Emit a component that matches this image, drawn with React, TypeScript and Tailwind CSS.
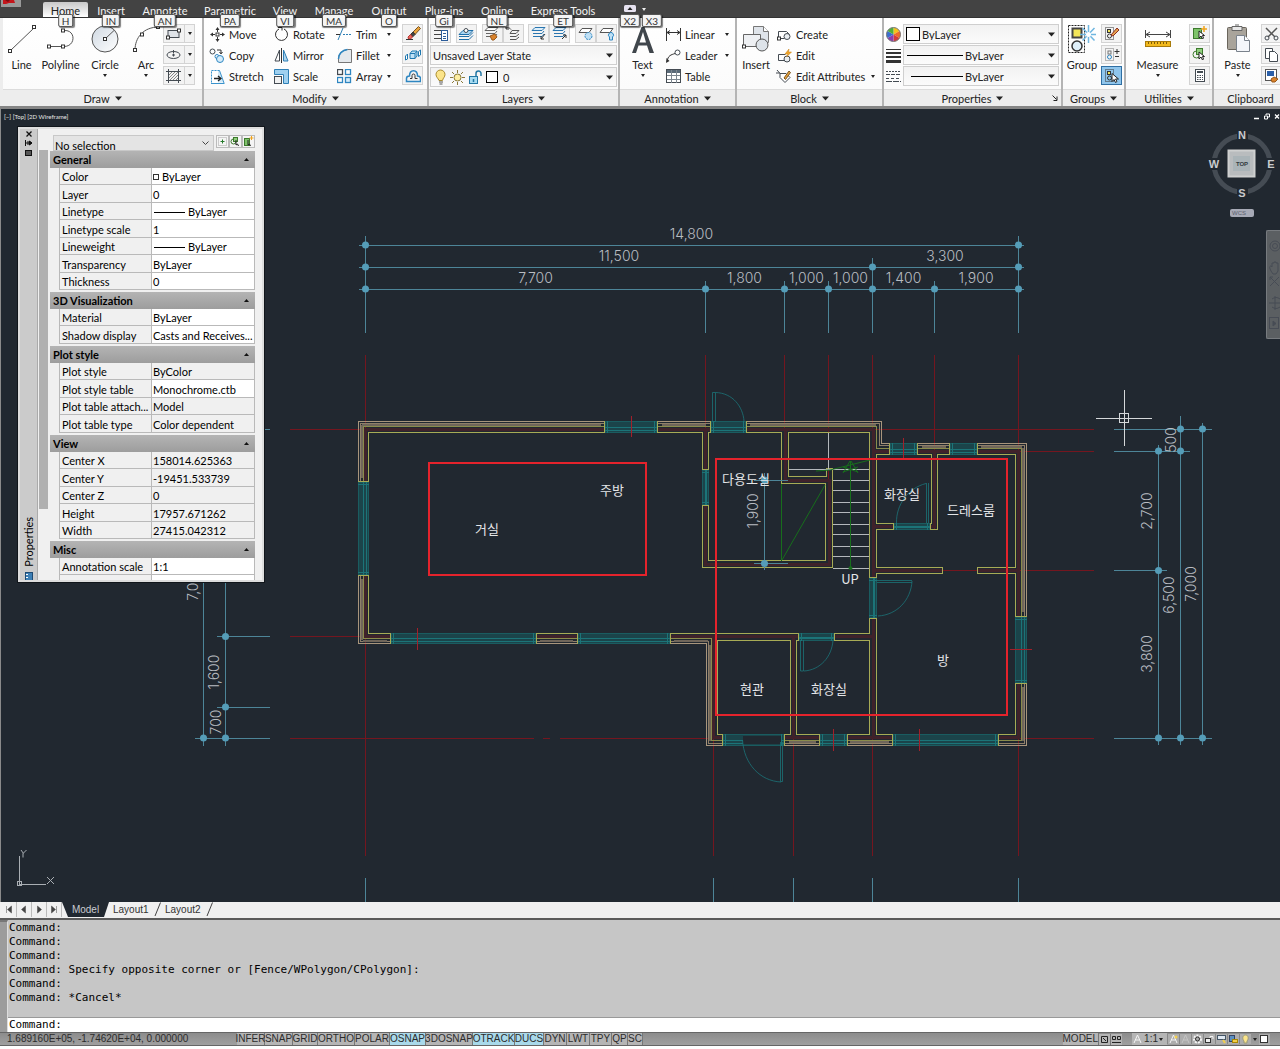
import React from "react";

type Kids = { children?: React.ReactNode };

/* ---------- shared pieces ---------- */

function Svg({ w = 16, h = 16, children }: Kids & { w?: number; h?: number }) {
  return (
    <svg width={w} height={h} viewBox={`0 0 ${w} ${h}`} fill="none" stroke="#444b52" strokeWidth="1" aria-hidden="true" className="block shrink-0">
      {children}
    </svg>
  );
}

function Caret({ big = false }: { big?: boolean }) {
  return big ? (
    <svg width="7" height="5" viewBox="0 0 7 5" aria-hidden="true" className="block shrink-0">
      <path d="M0 0.5h7L3.5 4.5z" fill="#222" />
    </svg>
  ) : (
    <svg width="4" height="3" viewBox="0 0 4 3" aria-hidden="true" className="block shrink-0">
      <path d="M0 0h4L2 3z" fill="#222" />
    </svg>
  );
}

function KeyTip({ children }: Kids) {
  return (
    <span className="absolute top-[14px] left-1/2 z-20 flex h-[13px] min-w-[15px] -translate-x-1/2 items-center justify-center rounded-[2px] border border-[#555] bg-[#f4f4f4] px-[3px] text-[10px] leading-none text-[#333] shadow-[1px_1px_1px_rgba(0,0,0,0.5)]">
      {children}
    </span>
  );
}

function Panel({ title, width, children, caret = true, launcher = false }: Kids & { title: string; width: string; caret?: boolean; launcher?: boolean }) {
  return (
    <section className={`flex shrink-0 grow flex-col border-r-2 border-[#b4b4b4] ${width}`}>
      <div className="flex h-[71px] items-start bg-gradient-to-b from-white to-[#fbfbfb] pt-[6px]">{children}</div>
      <button className="relative flex h-[17px] w-full items-center justify-center gap-[5px] border-t border-[#dcdcdc] bg-[#ededed] leading-none">
        <span>{title}</span>
        {caret && <Caret big />}
        {launcher && (
          <span className="absolute right-[3px] top-[5px]">
            <Svg w={6} h={6}>
              <path d="M0.5 0.5l4 4M5 1.5v4H1.5" stroke="#222" />
            </Svg>
          </span>
        )}
      </button>
    </section>
  );
}

function Big({ icon, label, width, arrow = false }: { icon: React.ReactNode; label: string; width: string; arrow?: boolean }) {
  return (
    <button className={`flex shrink-0 flex-col items-center ${width}`}>
      <span className="flex h-[34px] items-start justify-center">{icon}</span>
      <span className="leading-[14px]">{label}</span>
      {arrow && (
        <span className="mt-[2px]">
          <Caret />
        </span>
      )}
    </button>
  );
}

function Row({ icon, label, arrow = false }: { icon: React.ReactNode; label: string; arrow?: boolean }) {
  return (
    <button className="flex h-[21px] w-full items-center gap-1 whitespace-nowrap text-left leading-none">
      <span className="flex w-4 justify-center">{icon}</span>
      <span>{label}</span>
      {arrow && (
        <span className="ml-auto">
          <Caret />
        </span>
      )}
    </button>
  );
}

function Tile({ label, children, active = false, split = false }: Kids & { label: string; active?: boolean; split?: boolean }) {
  const tone = active ? "border-[#2f6fa3] bg-[#8fc5ec]" : "border-[#d3d3d3] bg-[#f3f3f3]";
  return (
    <button aria-label={label} className={`flex h-[19px] items-center justify-center border ${tone} ${split ? "w-[32px]" : "w-[21px]"}`}>
      {children}
      {split && (
        <span className="ml-[3px] flex h-full items-center border-l border-[#d3d3d3] pl-[3px]">
          <Caret />
        </span>
      )}
    </button>
  );
}

function Combo({ label, value, lead, pad }: { label: string; value: string; lead?: React.ReactNode; pad: string }) {
  return (
    <div className="relative h-[20px] min-w-0 flex-1 border border-[#cfcfcf] bg-gradient-to-b from-[#f2f2f2] to-[#fbfbfb]">
      {lead && <span className="pointer-events-none absolute inset-y-0 left-0 flex items-center">{lead}</span>}
      <select aria-label={label} className={`h-full w-full appearance-none bg-transparent leading-none outline-none ${pad}`}>
        <option>{value}</option>
      </select>
      <span className="pointer-events-none absolute right-[3px] top-[7px]">
        <Caret big />
      </span>
    </div>
  );
}

/* ---------- icons ---------- */

const node = (x: number, y: number) => <rect key={`${x}-${y}`} x={x - 1.5} y={y - 1.5} width="3" height="3" fill="#fff" stroke="#333" />;

const LineIcon = (
  <Svg w={28} h={30}>
    <path d="M3 26L26 4" stroke="#555" />
    {node(2, 27)}
    {node(26, 3)}
  </Svg>
);
const PolylineIcon = (
  <Svg w={30} h={30}>
    <path d="M3 22.5h15c12 0 12-17 0-16" stroke="#555" />
    {node(3, 22.5)}
    {node(17, 22.5)}
    {node(17, 6.5)}
  </Svg>
);
const CircleIcon = (
  <Svg w={28} h={30}>
    <defs>
      <linearGradient id="disc" x1="0" y1="0" x2="1" y2="1">
        <stop offset="0" stopColor="#cfd8e2" />
        <stop offset="1" stopColor="#fff" />
      </linearGradient>
    </defs>
    <circle cx="14" cy="15" r="13" fill="url(#disc)" stroke="#555" />
    <path d="M14 15l9-8.5" stroke="#555" />
    {node(14, 15)}
  </Svg>
);
const ArcIcon = (
  <Svg w={30} h={30}>
    <path d="M4 26C4 14 12 3 28 3" stroke="#555" />
    {node(4, 26)}
    {node(11, 10.5)}
    {node(27, 3)}
  </Svg>
);
const RectIcon = (
  <Svg w={15} h={12}>
    <rect x="2" y="2.5" width="11" height="7" fill="#dfe3e8" />
    {node(2, 9.5)}
    {node(13, 2.5)}
  </Svg>
);
const EllipseIcon = (
  <Svg w={15} h={12}>
    <ellipse cx="7.5" cy="6" rx="6.5" ry="3.5" />
    <path d="M6 6h3M7.5 4.5v3M7.5 1v3" />
  </Svg>
);
const HatchIcon = (
  <Svg w={15} h={14}>
    <path d="M2.5 0v14M12.5 0v14M0 2.5h15M0 11.500h15" />
    <path d="M3 6l3-3M3 9l6-6M4 11l8-8M7 11l5-5M10 11l2-2" stroke="#888" />
  </Svg>
);
const MoveIcon = (
  <Svg w={15} h={15}>
    <path d="M7.500 1v4M7.500 10v4M1 7.500h4M10 7.500h4" stroke="#333" />
    <path d="M7.500 0L5.500 3h4zM7.500 15l-2-3h4zM0 7.500l3-2v4zM15 7.500l-3-2v4z" fill="#333" stroke="none" />
    {node(7.5, 7.5)}
  </Svg>
);
const CopyIcon = (
  <Svg w={16} h={15}>
    <circle cx="3.500" cy="3.500" r="2.500" />
    <circle cx="8" cy="8.500" r="2" stroke="#2e86c1" />
    <circle cx="11" cy="11" r="3.500" fill="#d6ecfa" stroke="#2e86c1" />
    <path d="M8 2h4v3M10.500 4l1.500 2 1.500-2" stroke="#333" />
  </Svg>
);
const StretchIcon = (
  <Svg w={15} h={15}>
    <path d="M1.500 1.500h8l4 12h-12z" fill="#d3e9f7" stroke="none" />
    <path d="M2 2h6v12H2z" fill="#fff" stroke="none" />
    <path d="M1.500 13.500v-12h8" stroke="#3a93cc" strokeDasharray="2 1" />
    <path d="M1 14.500h13.500M9.500 1.500l4.500 12.500" stroke="#3a93cc" />
    <path d="M4 9.500h6M8 7l3 2.500L8 12" stroke="#222" strokeWidth="1.300" />
  </Svg>
);
const RotateIcon = (
  <Svg w={15} h={15}>
    <path d="M10 2A6 6 0 1 1 5 2" stroke="#333" />
    <path d="M4 0.500h4v3" stroke="#333" />
  </Svg>
);
const MirrorIcon = (
  <Svg w={15} h={15}>
    <path d="M5.500 2v11H1z" fill="#fff" />
    <path d="M9.500 2v11H14z" fill="#a9d3ee" stroke="#2e7fb5" />
    <path d="M7.500 0v15" stroke="#333" />
  </Svg>
);
const ScaleIcon = (
  <Svg w={15} h={15}>
    <path d="M0.500 0.500h14v14h-5v-9h-9z" fill="#9fd0ef" stroke="#2e7fb5" />
    <rect x="0.500" y="7.500" width="7" height="7" fill="#f1f1f1" />
  </Svg>
);
const TrimIcon = (
  <Svg w={16} h={13}>
    <path d="M2 12L7 0" stroke="#2e7fb5" />
    <path d="M0 6.500h4" stroke="#333" />
    <path d="M7 6.500h9" stroke="#2e7fb5" strokeDasharray="2 1" />
  </Svg>
);
const FilletIcon = (
  <Svg w={15} h={15}>
    <path d="M1.500 14.500v-4a10 9 0 0 1 9-9h4v13z" fill="#e4e8ec" stroke="#777" />
    <path d="M1.500 11a10 9 0 0 1 9-9.500" stroke="#2e86c1" strokeWidth="1.500" />
  </Svg>
);
const ArrayIcon = (
  <Svg w={15} h={15}>
    <rect x="0.500" y="0.500" width="5" height="5" strokeWidth="1.300" />
    <rect x="8.500" y="0.500" width="5" height="5" stroke="#2e86c1" strokeWidth="1.300" />
    <rect x="0.500" y="8.500" width="5" height="5" stroke="#2e86c1" strokeWidth="1.300" />
    <rect x="8.500" y="8.500" width="5" height="5" stroke="#2e86c1" fill="#d6ecfa" strokeWidth="1.300" />
  </Svg>
);
const EraseIcon = (
  <Svg w={16} h={15}>
    <path d="M8 6l5.500-5.500 2 2L10 8.500z" fill="#e8a33d" stroke="#7a5522" />
    <path d="M5.500 8.500L8 6l2 2.500-2.500 2.500z" fill="#444" stroke="#333" />
    <path d="M3 11l2.500-2.500 2 2.500-2 2H3.500z" fill="#e86b5b" stroke="#b33" />
    <path d="M1 13.500h7" stroke="#333" />
  </Svg>
);
const ExplodeIcon = (
  <Svg w={16} h={14}>
    <path d="M5 5.500L7 3h5v5l-2 2.500H5zM5 5.500h5v5M10 5.500L12 3" fill="#bfe1f5" stroke="#1f78b0" />
    <path d="M0.500 8l2-2v5l-2 1zM13.500 3.500l2-1.500v5l-2 1.500z" fill="#fff" stroke="#1f78b0" />
  </Svg>
);
const OffsetIcon = (
  <Svg w={16} h={14}>
    <path d="M5 9.500h2V6.500a1.500 1.500 0 0 1 3 0v3h2.500" stroke="#333" />
    <path d="M1.500 12.500V9.500c0-2 2-2.500 3-2.500C4.500 0 12.500 0 12.500 7c1 0 3 0.500 3 2.500v3z" stroke="#2e86c1" strokeWidth="1.500" />
  </Svg>
);
const sheets = (stroke: string, fill: string) => (
  <>
    <path d="M4 1.500h10l-3 3H1z" fill={fill} stroke={stroke} />
    <path d="M2 7.500h9l2-2.500M2 10.500h9l2-2.500" stroke={stroke} />
  </>
);
const LayerPropsIcon = (
  <Svg w={16} h={15}>
    <path d="M1 4.500h7M1 8.500h7M1 12.500h7" stroke="#444" />
    <rect x="8.500" y="4.500" width="6" height="10" fill="#fff" stroke="#2b5c9a" />
    <path d="M10 7.500h3M10 10.500h3M10 12.500h3" stroke="#2b5c9a" />
  </Svg>
);
const LayerMatchIcon = (
  <Svg w={16} h={14}>
    <path d="M5 3.500h10l-4 4H1z" fill="#a9d5f2" stroke="#1f6ea8" />
    <path d="M1 9.500h10l4-4M1 12.500h10l4-4" stroke="#1f6ea8" />
    <circle cx="8" cy="3.500" r="2" fill="#fff" />
  </Svg>
);
const LayerBrushIcon = (
  <Svg w={16} h={15}>
    {sheets("#666", "#fff")}
    <path d="M6 10l5-2 2 3-3 3H8z" fill="#d9822b" stroke="#99591a" />
  </Svg>
);
const LayerPrevIcon = (
  <Svg w={16} h={15}>
    <path d="M7 4.500h7l-3 3H5zM5 10.500h6l3-2.500M5 13.500h6l3-2.500" stroke="#555" />
    <path d="M6 3.500C4 1 2 1.500 1 2.500M1 0v3h3" stroke="#333" />
  </Svg>
);
const LayerIsoIcon = (
  <Svg w={16} h={15}>
    {sheets("#2a76b0", "#dceefa")}
    <path d="M14 8l-4 5M10 10v3h3" stroke="#333" />
  </Svg>
);
const LayerUnisoIcon = (
  <Svg w={16} h={15}>
    {sheets("#2a76b0", "#dceefa")}
    <path d="M10 13l4-4M11 9h3v3" stroke="#333" />
  </Svg>
);
const LayerFreezeIcon = (
  <Svg w={16} h={15}>
    <path d="M4 2.500h10l-3 4H1z" fill="#fff" stroke="#555" />
    <circle cx="10.500" cy="10" r="3.500" fill="#bfe0f5" stroke="#2e86c1" strokeDasharray="2 1" />
  </Svg>
);
const LayerOffIcon = (
  <Svg w={16} h={15}>
    <path d="M4 2.500h10l-3 4H1z" fill="#fff" stroke="#555" />
    <path d="M10.500 11a2.500 2.500 0 1 1 3 0v3h-3z" fill="#bfe0f5" stroke="#2e86c1" />
  </Svg>
);
const BulbIcon = (
  <Svg w={12} h={16}>
    <path d="M4 11.500C3 9 1 8 1 5.500a4.500 4.500 0 0 1 9 0C10 8 8 9 7.500 11.500z" fill="#fbe48a" stroke="#a98b2c" />
    <path d="M4 13h4M4.500 15h3" stroke="#555" />
  </Svg>
);
const SunIcon = (
  <Svg w={15} h={15}>
    <path d="M7.500 0v3M7.500 12v3M0 7.500h3M12 7.500h3M2 2l2 2M11 11l2 2M13 2l-2 2M4 11l-2 2" stroke="#8a7a3a" />
    <circle cx="7.500" cy="7.500" r="3.500" fill="#fdeea0" stroke="#8a7a3a" />
  </Svg>
);
const LockIcon = (
  <Svg w={15} h={15}>
    <rect x="1.500" y="6.500" width="8" height="7" fill="#a8dcf2" stroke="#2277a5" />
    <path d="M8 6V3.500a2.500 2.500 0 0 1 5 0V6M5.500 9v3" stroke="#2277a5" strokeWidth="1.500" />
  </Svg>
);
const TextIcon = (
  <Svg w={26} h={30}>
    <path d="M2 29L11.500 3h3L24 29h-4.500l-2.500-7.500H8.500L6 29zM9.500 18.500h6.500L13 8z" fill="#40464c" fillRule="evenodd" stroke="none" />
  </Svg>
);
const LinearIcon = (
  <Svg w={15} h={13}>
    <path d="M0.500 0v13M14.500 0v13M1 4.500h13M4 2.500l-3 2 3 2M11 2.500l3 2-3 2" stroke="#333" />
  </Svg>
);
const LeaderIcon = (
  <Svg w={15} h={14}>
    <path d="M1 13C2 6 5 6 9 4.500" stroke="#333" />
    <path d="M0 14l0.500-5 3 3z" fill="#333" stroke="none" />
    <circle cx="11.500" cy="3.500" r="2.500" fill="#fff" />
  </Svg>
);
const TableIcon = (
  <Svg w={15} h={15}>
    <rect x="0.500" y="0.500" width="14" height="13" fill="#fff" />
    <path d="M1 2.500h13" stroke="#5a6a78" strokeWidth="3" />
    <path d="M5.500 1v13M10.500 1v13M1 6.500h13M1 10.500h13" stroke="#7d8790" />
  </Svg>
);
const InsertIcon = (
  <Svg w={28} h={30}>
    <path d="M11.500 2.500h10l5 5v11h-15z" fill="#dfe4ea" stroke="#777" />
    <path d="M21.500 2.500v5h5" fill="#fff" stroke="#777" />
    <path d="M1.500 10.500h17v12h-17z" fill="#eef0f3" stroke="#666" />
    <circle cx="20" cy="21" r="6" fill="#dde3e9" stroke="#555" />
    {node(2, 22.5)}
  </Svg>
);
const CreateIcon = (
  <Svg w={15} h={12}>
    <path d="M1.500 9.500v-7h8l3 3" />
    <path d="M1.500 9.500h6" />
    <circle cx="10" cy="7.500" r="3" fill="#e9edf0" />
    {node(2, 9.500)}
  </Svg>
);
const BlockEditIcon = (
  <Svg w={15} h={14}>
    <path d="M1.500 11.500v-6h7M1.500 11.500h6" />
    <circle cx="10" cy="10" r="3" fill="#e9edf0" />
    <path d="M12 0L8 5h3L9.500 8l5-5h-3z" fill="#f2a628" stroke="#c47d10" strokeWidth="0.500" />
  </Svg>
);
const AttrIcon = (
  <Svg w={16} h={15}>
    <path d="M4 4.500h6l4 4-5 5-5-5z" fill="#fff" />
    <path d="M1 1l3 3.500M0 4h4" />
    <path d="M8 9l5-7 1.500 1.500-5 7z" fill="#e9a33a" stroke="#7a5522" />
  </Svg>
);
const ColorWheel = (
  <Svg w={15} h={15}>
    <g stroke="none">
      <path d="M7.500 7.500V0.500A7 7 0 0 1 13.560 4z" fill="#f6c21c" />
      <path d="M7.500 7.500L13.560 4A7 7 0 0 1 13.560 11z" fill="#ef6b2a" />
      <path d="M7.500 7.500L13.560 11A7 7 0 0 1 7.500 14.500z" fill="#d63a3a" />
      <path d="M7.500 7.500V14.500A7 7 0 0 1 1.440 11z" fill="#8a3fb0" />
      <path d="M7.500 7.500L1.440 11A7 7 0 0 1 1.440 4z" fill="#3a6fd0" />
      <path d="M7.500 7.500L1.440 4A7 7 0 0 1 7.500 0.500z" fill="#4fae3c" />
    </g>
    <circle cx="7.500" cy="7.500" r="7" stroke="#777" />
  </Svg>
);
const WeightIcon = (
  <Svg w={15} h={15}>
    <path d="M0 1.500h15" stroke="#333" />
    <path d="M0 5h15" stroke="#333" strokeWidth="2" />
    <path d="M0 9h15" stroke="#333" strokeWidth="2" />
    <path d="M0 13.500h15" stroke="#333" strokeWidth="3" />
  </Svg>
);
const LinetypeIcon = (
  <Svg w={15} h={13}>
    <path d="M0 1.500h15" strokeDasharray="2 1" />
    <path d="M0 4.500h15" strokeDasharray="4 1" />
    <path d="M0 8.500h15" strokeDasharray="3 2" />
    <path d="M0 11.500h15" strokeDasharray="6 1" />
  </Svg>
);
const GroupIcon = (
  <Svg w={30} h={30}>
    <rect x="1.500" y="1.500" width="16" height="27" stroke="#222" strokeDasharray="2 1" />
    <rect x="5.500" y="4.500" width="9" height="9" fill="#f3e65a" stroke="#444" strokeWidth="2" />
    <circle cx="10" cy="22" r="5" fill="#dff0fa" stroke="#333" strokeWidth="1.500" />
    <path d="M21.500 1v18M13 10.500h16M15.500 4l12 12.500M27.500 4l-12 12.500" stroke="#6fb6e0" strokeWidth="1.500" />
    <circle cx="21.500" cy="10.500" r="2.500" fill="#fff" stroke="none" />
  </Svg>
);
const smallGroup = (
  <>
    <rect x="1.500" y="1.500" width="8" height="12" stroke="#333" strokeDasharray="1 1" />
    <rect x="3.500" y="3.500" width="3" height="3" fill="#f3e65a" stroke="#333" />
    <circle cx="5.500" cy="10" r="2" stroke="#333" />
  </>
);
const UngroupIcon = (
  <Svg w={16} h={15}>
    {smallGroup}
    <path d="M7 9l6-7 2 2-6 6z" fill="#e5a04a" stroke="#8c2d22" />
  </Svg>
);
const GroupEditIcon = (
  <Svg w={16} h={15}>
    <rect x="1.500" y="1.500" width="8" height="12" stroke="#777" strokeDasharray="1 1" />
    <circle cx="5.500" cy="10" r="2" stroke="#2e86c1" />
    <rect x="4" y="4" width="3" height="3" stroke="#777" />
    <path d="M13 2v5M10.500 4.500h5M11 9.500h4" stroke="#333" />
  </Svg>
);
const cursor = <path d="M8 5.500v8l2-2 1.500 3 1.500-1-1.500-2.500h3z" fill="#fff" stroke="#222" />;
const GroupSelIcon = (
  <Svg w={16} h={15}>
    {smallGroup}
    {cursor}
  </Svg>
);
const MeasureIcon = (
  <Svg w={28} h={26}>
    <path d="M1.500 6v8M26.500 6v8M2 10.500h24M6 8l-4 2.500L6 13M22 8l4 2.500L22 13" stroke="#444" />
    <rect x="1.500" y="17.500" width="25" height="5" fill="#f2b91d" stroke="#a87b0b" />
    <path d="M4.500 18v2M7.500 18v2M10.500 18v2M13.500 18v2M16.500 18v2M19.500 18v2M22.500 18v2" stroke="#7d5b05" />
  </Svg>
);
const QuickSelIcon = (
  <Svg w={15} h={15}>
    <rect x="1.500" y="2.500" width="8" height="10" fill="#7ec36a" stroke="#3c7a2c" />
    <path d="M7 5v7l2-2 1.500 3 1-1-1-2.500h2z" fill="#fff" stroke="#222" />
    <path d="M12 0v6M9 3h6" stroke="#f0a21a" strokeWidth="1.500" />
  </Svg>
);
const SelSimilarIcon = (
  <Svg w={15} h={15}>
    <circle cx="4.500" cy="7.500" r="3.500" stroke="#3c7a2c" />
    <rect x="4.500" y="1.500" width="6" height="6" fill="#8fce7c" stroke="#3c7a2c" />
    <path d="M7 5v7l2-2 1.500 3 1-1-1-2.500h2z" fill="#fff" stroke="#222" />
  </Svg>
);
const CalcIcon = (
  <Svg w={12} h={15}>
    <rect x="1.500" y="1.500" width="9" height="12" fill="#fff" />
    <path d="M3 4h6" strokeWidth="2" />
    <path d="M3 7.500h6M3 9.500h6M3 11.500h6" strokeDasharray="1.500 1" />
  </Svg>
);
const PasteIcon = (
  <Svg w={26} h={30}>
    <rect x="2.500" y="3.500" width="19" height="22" rx="1" fill="#a9a49b" stroke="#6a655c" />
    <path d="M7 2.500h10v4H7z" fill="#e8e8e8" stroke="#666" />
    <path d="M10 1h4" stroke="#666" />
    <path d="M11.500 11.500h8l5 5v11h-13z" fill="#f4f6fa" stroke="#7a828c" />
    <path d="M19.500 11.500v5h5" fill="#fff" stroke="#7a828c" />
  </Svg>
);
const CutIcon = (
  <Svg w={15} h={14}>
    <path d="M2 1l9 9M13 1l-9 9" stroke="#555" strokeWidth="1.500" />
    <circle cx="3" cy="11" r="2" />
    <circle cx="12" cy="11" r="2" />
  </Svg>
);
const CopyClipIcon = (
  <Svg w={15} h={15}>
    <path d="M1.500 1.500h7v10h-7z" fill="#fff" />
    <path d="M5.500 4.500h5l3 3v7h-8z" fill="#fff" />
  </Svg>
);
const PasteSpecIcon = (
  <Svg w={15} h={15}>
    <rect x="1.500" y="1.500" width="11" height="11" fill="#fff" stroke="#555" />
    <rect x="3" y="3" width="7" height="5" fill="#2b5fa8" stroke="none" />
    <path d="M7 11l3-2 4 2-3 3H8z" fill="#d9822b" stroke="#99591a" />
  </Svg>
);

/* ---------- header and ribbon ---------- */

const tabs = [
  { name: "Home", tip: "H", w: "w-[45px]" },
  { name: "Insert", tip: "IN", w: "w-[46px]" },
  { name: "Annotate", tip: "AN", w: "w-[62px]" },
  { name: "Parametric", tip: "PA", w: "w-[68px]" },
  { name: "View", tip: "VI", w: "w-[42px]" },
  { name: "Manage", tip: "MA", w: "w-[56px]" },
  { name: "Output", tip: "O", w: "w-[54px]" },
  { name: "Plug-ins", tip: "Gi", w: "w-[56px]" },
  { name: "Online", tip: "NL", w: "w-[50px]" },
  { name: "Express Tools", tip: "ET", w: "w-[82px]" },
];

function TabStrip() {
  return (
    <header className="flex h-[17px] bg-[#434343] pl-px">
      <button aria-label="Application menu" className="mr-[22px] h-[7px] w-5 bg-[#999]">
        <svg width="20" height="7" viewBox="0 0 20 7" aria-hidden="true">
          <path d="M2 0h11l1 3H8L5 4H2z" fill="#c4161c" />
          <path d="M4 0h5l-2 2z" fill="#7d0a10" />
        </svg>
      </button>
      <nav className="flex">
        {tabs.map((t, i) => (
          <button
            key={t.name}
            className={`relative flex h-[17px] items-start justify-center whitespace-nowrap pt-[5px] leading-[11px] ${t.w} ${i === 0 ? "text-[#222]" : "text-[#f2f2f2]"}`}
          >
            {i === 0 && <span className="absolute inset-x-0 bottom-0 top-[2px] rounded-t-[2px] bg-gradient-to-b from-[#c9c9c9] to-white" />}
            <span className="relative">{t.name}</span>
            <KeyTip>{t.tip}</KeyTip>
          </button>
        ))}
      </nav>
      <button aria-label="Minimize ribbon" className="relative ml-[16px] flex w-[20px] justify-center pt-[5px]">
        <svg width="12" height="7" viewBox="0 0 12 7" aria-hidden="true">
          <rect width="12" height="7" rx="1.500" fill="#e6e2f0" />
          <path d="M3.500 5h5L6 2z" fill="#222" />
        </svg>
        <KeyTip>X2</KeyTip>
      </button>
      <button aria-label="Ribbon options" className="relative flex w-[24px] justify-start pl-[2px] pt-[8px]">
        <svg width="4" height="3" viewBox="0 0 4 3" aria-hidden="true">
          <path d="M0 0h4L2 3z" fill="#eee" />
        </svg>
        <KeyTip>X3</KeyTip>
      </button>
    </header>
  );
}

const layerTools: [string, React.ReactNode][][] = [
  [["Layer properties", LayerPropsIcon]],
  [["Make current", LayerMatchIcon]],
  [["Match", LayerBrushIcon], ["Previous", LayerPrevIcon]],
  [["Isolate", LayerIsoIcon], ["Unisolate", LayerUnisoIcon]],
  [["Freeze", LayerFreezeIcon], ["Off", LayerOffIcon]],
];

function Ribbon() {
  return (
    <div className="flex overflow-hidden border-b-[3px] border-t border-b-[#858585] border-t-[#333] bg-[#ededed] pl-[3px] text-[#222]">
      <Panel title="Draw" width="w-[201px]">
        <Big icon={LineIcon} label="Line" width="w-[37px]" />
        <Big icon={PolylineIcon} label="Polyline" width="w-[41px]" />
        <Big icon={CircleIcon} label="Circle" width="w-[48px]" arrow />
        <Big icon={ArcIcon} label="Arc" width="w-[34px]" arrow />
        <div className="flex flex-col gap-[2px]">
          <Tile label="Rectangle" split>{RectIcon}</Tile>
          <Tile label="Ellipse" split>{EllipseIcon}</Tile>
          <Tile label="Hatch" split>{HatchIcon}</Tile>
        </div>
      </Panel>
      <Panel title="Modify" width="w-[225px]">
        <div className="w-[64px] pl-[5px]">
          <Row icon={MoveIcon} label="Move" />
          <Row icon={CopyIcon} label="Copy" />
          <Row icon={StretchIcon} label="Stretch" />
        </div>
        <div className="w-[63px] pl-[5px]">
          <Row icon={RotateIcon} label="Rotate" />
          <Row icon={MirrorIcon} label="Mirror" />
          <Row icon={ScaleIcon} label="Scale" />
        </div>
        <div className="mr-[11px] w-[60px] pl-[5px]">
          <Row icon={TrimIcon} label="Trim" arrow />
          <Row icon={FilletIcon} label="Fillet" arrow />
          <Row icon={ArrayIcon} label="Array" arrow />
        </div>
        <div className="flex flex-col gap-[2px]">
          <Tile label="Erase">{EraseIcon}</Tile>
          <Tile label="Explode">{ExplodeIcon}</Tile>
          <Tile label="Offset">{OffsetIcon}</Tile>
        </div>
      </Panel>
      <Panel title="Layers" width="w-[191px]">
        <div className="flex w-full flex-col gap-[2px] px-px">
          <div className="flex justify-between">
            {layerTools.map((set) => (
              <div key={set[0][0]} className="flex">
                {set.map(([name, icon]) => (
                  <Tile key={name} label={name}>{icon}</Tile>
                ))}
              </div>
            ))}
          </div>
          <div className="flex">
            <Combo label="Layer state" value="Unsaved Layer State" pad="pl-[2px]" />
          </div>
          <div className="flex">
            <Combo
              label="Layer"
              value="0"
              pad="pl-[72px]"
              lead={
                <span className="flex items-center gap-[3px] pl-1">
                  {BulbIcon}
                  {SunIcon}
                  {LockIcon}
                  <span className="h-3 w-3 border border-black bg-white" />
                </span>
              }
            />
          </div>
        </div>
      </Panel>
      <Panel title="Annotation" width="w-[117px]">
        <Big icon={TextIcon} label="Text" width="w-[45px]" arrow />
        <div className="w-[64px]">
          <Row icon={LinearIcon} label="Linear" arrow />
          <Row icon={LeaderIcon} label="Leader" arrow />
          <Row icon={TableIcon} label="Table" />
        </div>
      </Panel>
      <Panel title="Block" width="w-[147px]">
        <Big icon={InsertIcon} label="Insert" width="w-[38px]" />
        <div className="w-[100px] pl-px">
          <Row icon={CreateIcon} label="Create" />
          <Row icon={BlockEditIcon} label="Edit" />
          <Row icon={AttrIcon} label="Edit Attributes" arrow />
        </div>
      </Panel>
      <Panel title="Properties" width="w-[179px]" launcher>
        <div className="flex w-full flex-col gap-px px-[2px]">
          <div className="flex items-center gap-[2px]">
            {ColorWheel}
            <Combo label="Color" value="ByLayer" pad="pl-[18px]" lead={<span className="ml-[2px] h-[14px] w-[14px] border border-black bg-white" />} />
          </div>
          <div className="flex items-center gap-[2px]">
            {WeightIcon}
            <Combo label="Lineweight" value="ByLayer" pad="pl-[61px]" lead={<span className="ml-[3px] h-px w-[56px] bg-black" />} />
          </div>
          <div className="flex items-center gap-[2px]">
            {LinetypeIcon}
            <Combo label="Linetype" value="ByLayer" pad="pl-[61px]" lead={<span className="ml-[7px] h-px w-[52px] bg-black" />} />
          </div>
        </div>
      </Panel>
      <Panel title="Groups" width="w-[63px]">
        <Big icon={GroupIcon} label="Group" width="w-[38px]" />
        <div className="flex flex-col gap-[2px]">
          <Tile label="Ungroup">{UngroupIcon}</Tile>
          <Tile label="Group edit">{GroupEditIcon}</Tile>
          <Tile label="Group selection" active>{GroupSelIcon}</Tile>
        </div>
      </Panel>
      <Panel title="Utilities" width="w-[88px]">
        <Big icon={MeasureIcon} label="Measure" width="w-[63px]" arrow />
        <div className="flex flex-col gap-[2px]">
          <Tile label="Quick select">{QuickSelIcon}</Tile>
          <Tile label="Select similar">{SelSimilarIcon}</Tile>
          <Tile label="Calculator">{CalcIcon}</Tile>
        </div>
      </Panel>
      <Panel title="Clipboard" width="w-[75px]" caret={false}>
        <Big icon={PasteIcon} label="Paste" width="w-[47px]" arrow />
        <div className="flex flex-col gap-[2px]">
          <Tile label="Cut">{CutIcon}</Tile>
          <Tile label="Copy clip">{CopyClipIcon}</Tile>
          <Tile label="Paste special">{PasteSpecIcon}</Tile>
        </div>
      </Panel>
    </div>
  );
}

/* ---------- floor plan ---------- */

const DIM = "#4d8598";
const DOT = "#559db8";
const TAN = "#a8957c";
const YEL = "#a7ab55";
const TEAL = "#1c7478";
const AXIS = "#74161f";
const BG = "#212830";

const outline = (d: number) =>
  `M${358.5 + d} ${421.5 + d}H${881.5 - d}V${443.5 + d}H${1026.5 - d}V${745.5 - d}H${706.5 + d}V${643.5 - d}H${358.5 + d}Z`;

const rooms = [
  "M368.500 432.500H702.500V567.500H832.500V468.500H826.500V476.500H788.500V432.500H869.500V633.500H368.500Z",
  "M708.500 432.500H781.500V483.500H825.500V560.500H708.500Z",
  "M876.500 454.500H931.500V523.500H876.500Z",
  "M937.500 454.500H1015.500V567.500H977.500V573.500H1015.500V734.500H876.500V573.500H942.500V567.500H876.500V529.500H937.500Z",
  "M717.500 640.500H790.500V734.500H717.500Z",
  "M796.500 640.500H869.500V734.500H796.500Z",
];

/* x, y, width, height of each glazed opening */
const openings: number[][] = [
  [605, 421, 52, 12],
  [711, 421, 35, 12],
  [890, 443, 27, 12],
  [950, 443, 27, 12],
  [358, 482, 11, 93],
  [391, 633, 145, 11],
  [578, 633, 92, 11],
  [702, 470, 7, 35],
  [894, 523, 36, 7],
  [869, 578, 8, 40],
  [799, 633, 35, 8],
  [1015, 617, 12, 66],
  [723, 734, 61, 12],
  [820, 734, 27, 12],
  [893, 734, 105, 12],
];

/* tan infill strips inside the outer wall: x1, y1, x2, y2 */
const infill: number[][] = [
  [362, 425, 601, 425],
  [662, 425, 706, 425],
  [750, 425, 876, 425],
  [922, 447, 946, 447],
  [981, 447, 1022, 447],
  [362, 425, 362, 478],
  [362, 579, 362, 640],
  [363, 641, 387, 641],
  [540, 641, 573, 641],
  [674, 641, 708, 641],
  [710, 645, 710, 741],
  [1023, 448, 1023, 612],
  [1023, 687, 1023, 741],
  [789, 742, 816, 742],
  [850, 742, 889, 742],
];

const dots: number[][] = [
  [365.5, 245], [1018.5, 245],
  [365.5, 267], [872.5, 267], [1018.5, 267],
  [365.5, 289], [705.5, 289], [784.5, 289], [828.5, 289], [872.5, 289], [934.5, 289], [1018.5, 289],
  [225.5, 636.5], [225.5, 707], [225.5, 738], [203.5, 738],
  [1180.5, 429], [1202.5, 429], [1158.5, 451], [1180.5, 451], [1158.5, 570.5],
  [1158.5, 738], [1180.5, 738], [1202.5, 738],
  [764.5, 480], [764.5, 563.5],
];

const hDims: [number, number, string][] = [
  [691.5, 239, "14,800"],
  [619, 261, "11,500"],
  [945, 261, "3,300"],
  [535.5, 283, "7,700"],
  [744.5, 283, "1,800"],
  [806.5, 283, "1,000"],
  [850.5, 283, "1,000"],
  [903.5, 283, "1,400"],
  [976, 283, "1,900"],
];

const vDims: [number, number, string][] = [
  [198, 583, "7,000"],
  [219, 672, "1,600"],
  [221, 722, "700"],
  [1176, 440, "500"],
  [1152, 511, "2,700"],
  [1152, 654, "3,800"],
  [1174, 595, "6,500"],
  [1196, 584, "7,000"],
  [758, 511, "1,900"],
];

const labels: [number, number, string][] = [
  [487, 534, "거실"],
  [612, 495, "주방"],
  [746, 484, "다용도실"],
  [902, 499, "화장실"],
  [971, 515, "드레스룸"],
  [850, 584, "UP"],
  [943, 665, "방"],
  [752, 694, "현관"],
  [829, 694, "화장실"],
];

const stairs = [480.5, 490.5, 502.5, 512.5, 524.5, 534.5, 546.5, 556.5, 568.5];

function FloorPlan() {
  return (
    <svg viewBox="0 109 1280 793" className="block w-full" fill="none" role="img" aria-label="Floor plan drawing">
      <g stroke={AXIS} shapeRendering="crispEdges">
        <path d="M365.500 355V856M705.500 355V480M784.500 355V480M828.500 355V480M872.500 355V856M934.500 355V530M1018.500 355V856M713.500 636V856M793.500 636V856" />
        <path d="M290 429.500H1094M872 451.500H1094M872 570.500H1094M290 636.500H875M290 738.500H534M543 738.500H550M560 738.500H1094" />
      </g>

      <g stroke="#40222a" strokeWidth="3" shapeRendering="crispEdges">
        <path d="M365.500 429.500H873.500V451.500H1018.500V737.500H713.500V636.500H365.500Z" />
        <path d="M705.500 430V564.500H829.500V480.500H785.500V430M873.500 430V738M934.500 451V526.500H873M873 570.500H943M977 570.500H1019M714 636.500H873M793.500 637V738" />
      </g>

      <g shapeRendering="crispEdges">
        <path d={outline(0)} stroke={TAN} />
        <path d={outline(2)} stroke="#8f7f69" />
        <path d={outline(5)} stroke="#8a8c4c" />
        {rooms.map((d) => (
          <path key={d} d={d} stroke={YEL} />
        ))}
        {infill.map(([a, b, c, d]) => (
          <path key={`${a}-${b}-${c}-${d}`} d={`M${a} ${b}L${c} ${d}`} stroke="#70665a" strokeWidth="2" />
        ))}
        {openings.map(([x, y, w, h]) => {
          const wide = w > h;
          return (
            <g key={`${x}-${y}`}>
              <rect x={x - 1} y={y} width={w + 2} height={h} fill={BG} />
              <rect x={x + 0.5} y={y + 0.5} width={w - 1} height={h - 1} fill="#1b444a" stroke="#1a5c60" />
              {wide ? (
                <path d={`M${x} ${y + Math.floor(h / 2) + 0.5}h${w}M${x} ${y + h - 2.5}h${w}M${x + 2.5} ${y}v${h}M${x + w - 2.5} ${y}v${h}`} stroke={TEAL} />
              ) : (
                <path d={`M${x + Math.floor(w / 2) + 0.5} ${y}v${h}M${x + w - 2.5} ${y}v${h}M${x} ${y + 2.5}h${w}M${x} ${y + h - 2.5}h${w}`} stroke={TEAL} />
              )}
              {wide ? (
                <path d={`M${x - 0.5} ${y}v${h}M${x + w + 0.5} ${y}v${h}`} stroke={YEL} />
              ) : (
                <path d={`M${x} ${y - 0.5}h${w}M${x} ${y + h + 0.5}h${w}`} stroke={YEL} />
              )}
            </g>
          );
        })}
        <rect x="743" y="736" width="38" height="8" fill={BG} />
      </g>

      <g stroke={TEAL} strokeWidth="0.800">
        <path d="M712.500 392.500h3v29h-3zM715.500 392.500C733 393 743 407 744 421" />
        <path d="M926.500 483v40M928.500 483v40M926 483.500C908 488 896 505 896.500 523" />
        <path d="M877 580.500h35M877 582.500h35M912 581C911 600 897 615 878 616" />
        <path d="M800.500 640v31h3v-31M804 671C820 670 832 657 833 640" />
        <path d="M780.500 742v39.500h2V742M742.500 740C744 764 760 781 781 782" />
      </g>

      <g stroke="#a3202a" shapeRendering="crispEdges">
        <path d="M631.500 416v21M903.500 438v21M417.500 628v22M833.500 729v22M919.500 729v22M1010 649.500h22" />
      </g>

      <g stroke="#b4b8bc" shapeRendering="crispEdges">
        <path d="M828.500 433v36M789 469.500h80" />
        {stairs.map((y) => (
          <path key={y} d={`M833 ${y}h36`} />
        ))}
      </g>
      <g stroke="#176e1c">
        <path d="M850.500 461v109M781.500 484v77M782 560L825 485M816 471l14-1 40-10M850 461l-7 12M851 461l7 12M843 467l15 5M858 467l-15 5" />
        <circle cx="850.500" cy="568" r="1.500" fill="#176e1c" />
      </g>

      <g stroke={DIM} shapeRendering="crispEdges">
        <path d="M359 245.500H1024M359 267.500H1024M359 289.500H1024" />
        <path d="M365.500 236V333M1018.500 236V333M872.500 258V333M705.500 281V333M784.500 281V333M828.500 281V333M934.500 281V333" />
        <path d="M203.500 560V746M225.500 560V746M217 636.500h53M217 707.500h53M195 738.500h75M260 429.500h10" />
        <path d="M1158.500 445V745M1180.500 416V745M1202.500 423V745M1114 429.500h98M1114 451.500h76M1114 570.500h53M1114 738.500h98" />
        <path d="M365.500 878v24M713.500 878v24M793.500 878v24M872.500 878v24M1018.500 878v24" />
        <path d="M764.500 473v97M754 480.500h34M754 563.500h34" />
      </g>
      {dots.map(([x, y]) => (
        <circle key={`${x}-${y}`} cx={x} cy={y} r="3.500" fill={DOT} />
      ))}

      <g fill="#b9bdc2" className="font-['Inter'] text-[14px] font-light" textAnchor="middle">
        {hDims.map(([x, y, t]) => (
          <text key={`${x}-${y}`} x={x} y={y}>{t}</text>
        ))}
        {vDims.map(([x, y, t]) => (
          <text key={`${x}-${y}`} transform={`translate(${x} ${y}) rotate(-90)`}>{t}</text>
        ))}
      </g>
      <g fill="#e4e6e8" className="font-['Noto_Sans_CJK_KR',sans-serif] text-[13px]" textAnchor="middle">
        {labels.map(([x, y, t]) => (
          <text key={`${x}-${y}`} x={x} y={y}>{t}</text>
        ))}
      </g>

      <g stroke="#e5232c" strokeWidth="2" shapeRendering="crispEdges">
        <rect x="429" y="463" width="217" height="112" />
        <rect x="716" y="459" width="291" height="256" />
      </g>

      <g stroke="#d5d8da" shapeRendering="crispEdges">
        <path d="M1096 418.500h56M1124.500 390v56" />
        <rect x="1119.500" y="413.500" width="9" height="9" />
      </g>

      <g stroke="#a9aeb3" shapeRendering="crispEdges">
        <path d="M19.500 856v28M19 884.500h27" />
        <rect x="17.500" y="881.500" width="4" height="4" />
      </g>
      <g stroke="#a9aeb3">
        <path d="M21 850l2.500 3.500M26.500 850l-3.500 3.500v4M47 877l7 7M54 877l-7 7" />
      </g>
    </svg>
  );
}

/* ---------- properties palette ---------- */

type Prop = { k: string; v: string; ro?: boolean; mark?: "box" | "line" };
const groups: { title: string; rows: Prop[] }[] = [
  {
    title: "General",
    rows: [
      { k: "Color", v: "ByLayer", mark: "box" },
      { k: "Layer", v: "0" },
      { k: "Linetype", v: "ByLayer", mark: "line" },
      { k: "Linetype scale", v: "1" },
      { k: "Lineweight", v: "ByLayer", mark: "line" },
      { k: "Transparency", v: "ByLayer" },
      { k: "Thickness", v: "0" },
    ],
  },
  {
    title: "3D Visualization",
    rows: [
      { k: "Material", v: "ByLayer" },
      { k: "Shadow display", v: "Casts and Receives..." },
    ],
  },
  {
    title: "Plot style",
    rows: [
      { k: "Plot style", v: "ByColor", ro: true },
      { k: "Plot style table", v: "Monochrome.ctb" },
      { k: "Plot table attach...", v: "Model", ro: true },
      { k: "Plot table type", v: "Color dependent", ro: true },
    ],
  },
  {
    title: "View",
    rows: [
      { k: "Center X", v: "158014.625363", ro: true },
      { k: "Center Y", v: "-19451.533739", ro: true },
      { k: "Center Z", v: "0", ro: true },
      { k: "Height", v: "17957.671262", ro: true },
      { k: "Width", v: "27415.042312", ro: true },
    ],
  },
  { title: "Misc", rows: [{ k: "Annotation scale", v: "1:1" }, { k: "", v: "" }] },
];

function Palette() {
  return (
    <aside className="absolute left-[18px] top-[18px] flex h-[455px] w-[246px] overflow-hidden border-2 border-[#dedede] bg-[#f0f0f0] text-black shadow-[0_0_0_1px_#11161b]">
      <div className="flex w-[18px] shrink-0 flex-col items-center border-r border-[#aaa] bg-[#cbcbcb]">
        <button aria-label="Close palette" className="flex h-[9px] items-center">
          <Svg w={6} h={6}>
            <path d="M0.500 0.500l5 5M5.500 0.500l-5 5" stroke="#111" strokeWidth="1.300" />
          </Svg>
        </button>
        <button aria-label="Auto-hide" className="flex h-[10px] items-center">
          <Svg w={7} h={6}>
            <path d="M0.500 0v6M1 3h6M3 1v4M4.500 1L7 3 4.500 5z" stroke="#111" fill="#111" />
          </Svg>
        </button>
        <button aria-label="Palette menu" className="flex h-[10px] items-center">
          <Svg w={7} h={6}>
            <rect x="0.500" y="0.500" width="6" height="5" fill="#555" stroke="#111" />
          </Svg>
        </button>
        <div className="mt-auto flex flex-col items-center gap-[5px]">
          <span className="rotate-180 leading-none [writing-mode:vertical-rl]">Properties</span>
          <Svg w={8} h={8}>
            <rect x="0.500" y="0.500" width="7" height="8" fill="#3c7fb5" stroke="#1d4a73" />
            <path d="M1 2.500h2M1 5.500h2" stroke="#fff" />
          </Svg>
        </div>
      </div>
      <div className="w-[11px] shrink-0 pl-px pt-[21px]">
        <div className="h-[359px] w-[9px] bg-[#b0b0b0]" />
      </div>
      <div className="min-w-0 flex-1 pl-px pr-[7px] pt-[6px]">
        <div className="ml-[3px] flex h-[16px] items-start">
          <div className="relative mr-[2px] h-full flex-1 border border-[#c8c8c8] bg-[#e4e4e4]">
            <select aria-label="Selection" className="h-[19px] w-full appearance-none bg-transparent pl-px leading-none outline-none">
              <option>No selection</option>
            </select>
            <span className="pointer-events-none absolute right-1 top-[5px]">
              <Svg w={7} h={5}>
                <path d="M0.500 0.500l3 3 3-3" stroke="#444" />
              </Svg>
            </span>
          </div>
          <button aria-label="Toggle pickadd" className="flex h-[13px] w-[13px] items-center justify-center border border-[#bbb] bg-[#f4f4f4]">
            <Svg w={9} h={9}>
              <rect x="0.500" y="0.500" width="8" height="8" stroke="#ccc" />
              <path d="M4.500 2.500v4M2.500 4.500h4" stroke="#257a2a" />
            </Svg>
          </button>
          <button aria-label="Select objects" className="flex h-[13px] w-[13px] items-center justify-center border border-[#bbb] bg-[#f4f4f4]">
            <Svg w={11} h={11}>
              <circle cx="3.500" cy="5.500" r="2.500" stroke="#3c7a2c" />
              <rect x="3.500" y="1.500" width="4" height="4" fill="#8fce7c" stroke="#3c7a2c" />
              <path d="M6 4v5l1.500-1 1 2" stroke="#222" />
            </Svg>
          </button>
          <button aria-label="Quick select objects" className="flex h-[13px] w-[13px] items-center justify-center border border-[#bbb] bg-[#f4f4f4]">
            <Svg w={11} h={11}>
              <rect x="1.500" y="2.500" width="5" height="7" fill="#7ec36a" stroke="#3c7a2c" />
              <path d="M5 4v5l1.500-1 1 2" stroke="#222" />
              <path d="M8.500 0v4M6.500 2h4" stroke="#f0a21a" />
            </Svg>
          </button>
        </div>
        {groups.map((g) => (
          <section key={g.title} className="mb-[2px]">
            <button className="flex h-[17px] w-full items-center justify-between bg-gradient-to-b from-[#b4b4b4] to-[#9d9d9d] pl-[3px] pr-[6px] font-bold leading-none">
              <span>{g.title}</span>
              <svg width="5" height="3" viewBox="0 0 5 3" aria-hidden="true">
                <path d="M0 3h5L2.500 0z" fill="#111" />
              </svg>
            </button>
            <div className="pl-[9px]">
              <table className="w-full table-fixed border-separate border-spacing-0 border-l border-[#b9b9b9]">
                <tbody>
                  {g.rows.map((r) => (
                    <tr key={r.k} className="odd:h-[17px] even:h-[18px]">
                      <th scope="row" className="w-[92px] overflow-hidden whitespace-nowrap border-b border-r border-[#b9b9b9] p-0 pl-[2px] pt-[2px] text-left font-normal leading-[14px]">
                        {r.k}
                      </th>
                      <td className={`whitespace-nowrap border-b border-r border-[#b9b9b9] p-0 pl-px pt-[2px] leading-[14px] ${r.ro ? "bg-[#f0f0f0]" : "bg-white"}`}>
                        <span className="flex items-center">
                          {r.mark === "box" && <span className="mr-[3px] h-[6px] w-[6px] border border-[#333]" />}
                          {r.mark === "line" && <span className="ml-px mr-[3px] h-px w-[31px] bg-black" />}
                          {r.v}
                        </span>
                      </td>
                    </tr>
                  ))}
                </tbody>
              </table>
            </div>
          </section>
        ))}
      </div>
    </aside>
  );
}

/* ---------- viewport overlays ---------- */

function ViewCube() {
  return (
    <div className="absolute right-[3px] top-[20px] flex flex-col items-center">
      <svg width="70" height="72" viewBox="0 0 70 72" aria-label="View cube" role="img">
        <circle cx="35" cy="35" r="28" fill="none" stroke="#454c54" strokeWidth="5" />
        <g fill={BG}>
          <rect x="30" y="1" width="11" height="11" />
          <rect x="30" y="58" width="11" height="11" />
          <rect x="0" y="29" width="13" height="12" />
          <rect x="58" y="29" width="12" height="12" />
        </g>
        <rect x="21.500" y="21.500" width="26" height="26" fill="#b9bcbe" stroke="#cfd0d0" strokeWidth="2" />
        <rect x="26" y="27" width="17" height="15" fill="#aab4b8" />
        <g className="font-['Liberation_Sans'] text-[11px] font-bold" fill="#c9cbcd" textAnchor="middle">
          <text x="35" y="10">N</text>
          <text x="35" y="68">S</text>
          <text x="7" y="39">W</text>
          <text x="64" y="39">E</text>
        </g>
        <text x="35" y="37" textAnchor="middle" fill="#333a40" className="font-['Liberation_Sans'] text-[6px] font-bold">TOP</text>
      </svg>
      <button className="mt-[8px] h-[8px] w-[24px] rounded-[2px] bg-[#a7aab6] pl-[2px] text-left font-['Liberation_Sans'] text-[6px] leading-[8px] text-[#5b5f6c]">WCS</button>
    </div>
  );
}

function NavBar() {
  return (
    <div className="absolute right-0 top-[121px] h-[109px] w-[14px] rounded-l-[2px] border border-r-0 border-[#777b7f] bg-[#5b5f62]">
      <svg width="13" height="107" viewBox="0 0 13 107" fill="none" stroke="#474c55" aria-hidden="true">
        <circle cx="8" cy="15" r="5" />
        <circle cx="8" cy="15" r="2.500" />
        <path d="M4 40c-3-5 0-6 1-4v-4h2v-1h2v1h2v8l-2 3H6z" />
        <path d="M3 46l9 9M12 46l-9 9M3 46h3M3 46v3" />
        <path d="M8 65v14M2 72h11M5 68c3-2 5-2 8 0M5 76c3 2 5 2 8 0" />
        <rect x="2.500" y="86.500" width="9" height="11" />
        <path d="M6 90v5l3-2.500z" fill="#474c55" />
      </svg>
    </div>
  );
}

function Viewport() {
  return (
    <main className="relative bg-[#212830]">
      <FloorPlan />
      <span className="absolute inset-y-0 left-0 w-px bg-[#8a8a8a]" />
      <span className="absolute left-[4px] top-[4px] text-[6px] leading-[8px] text-[#e8e8e8]">[−] [Top] [2D Wireframe]</span>
      <div className="absolute right-0 top-[4px] flex gap-1">
        <button aria-label="Minimize drawing">
          <Svg w={6} h={7}>
            <path d="M0 5.500h5" stroke="#fff" strokeWidth="1.500" />
          </Svg>
        </button>
        <button aria-label="Restore drawing">
          <Svg w={6} h={7}>
            <path d="M2 2V1h3.500v3H4M0.500 3h3v3h-3z" stroke="#fff" />
          </Svg>
        </button>
        <button aria-label="Close drawing">
          <Svg w={6} h={7}>
            <path d="M1 1.500l4 4M5 1.500l-4 4" stroke="#fff" strokeWidth="1.300" />
          </Svg>
        </button>
      </div>
      <ViewCube />
      <NavBar />
      <Palette />
    </main>
  );
}

/* ---------- bottom bars ---------- */

const steps: [string, string][] = [
  ["First layout", "M2.500 1v7M7.500 1v7L3.500 4.500z"],
  ["Previous layout", "M6.500 1v7L2.500 4.500z"],
  ["Next layout", "M3.500 1v7l4-3.500z"],
  ["Last layout", "M2.500 1v7l4-3.500zM7.500 1v7"],
];

function LayoutTabs() {
  return (
    <div className="flex h-[18px] items-start border-b-2 border-[#5a5a5a] bg-[#f0f0f0] pl-[2px] font-['Liberation_Sans'] text-[10px] text-[#333]">
      {steps.map(([name, d]) => (
        <button key={name} aria-label={name} className="flex h-[15px] w-[15px] items-center justify-center border-r border-[#bbb]">
          <Svg w={10} h={9}>
            <path d={d} fill="#444" stroke="#444" strokeWidth="0.500" />
          </Svg>
        </button>
      ))}
      <button className="h-[15px] w-[47px] bg-[#212830] leading-[16px] text-[#c9ccd0] [clip-path:polygon(0_0,100%_0,calc(100%-5px)_100%,6px_100%)]">Model</button>
      {["Layout1", "Layout2"].map((n) => (
        <button key={n} className="flex h-[15px] w-[52px] items-center justify-between leading-[16px]">
          <span className="pl-[4px]">{n}</span>
          <Svg w={7} h={15}>
            <path d="M6.500 0.500L1 14" stroke="#444" />
          </Svg>
        </button>
      ))}
    </div>
  );
}

const history = ["Command:", "Command:", "Command:", "Command: Specify opposite corner or [Fence/WPolygon/CPolygon]:", "Command:", "Command: *Cancel*"];

function CommandWindow() {
  return (
    <section className="flex bg-[#c6c6c6] font-['DejaVu_Sans_Mono'] text-[11px] text-black">
      <div className="w-[8px] shrink-0 border-t-2 border-r border-[#777] border-r-[#ddd] bg-[#9c9c9c]" />
      <div className="min-w-0 flex-1">
        <div className="h-[98px] border-b border-[#999] pl-px pt-px leading-[14px]">
          {history.map((l, i) => (
            <p key={i}>{l}</p>
          ))}
        </div>
        <div className="flex h-[14px] items-center bg-white pl-px leading-[14px]">
          <label htmlFor="cmd">Command:</label>
          <input id="cmd" className="ml-2 h-[14px] min-w-0 flex-1 bg-transparent outline-none" />
        </div>
      </div>
    </section>
  );
}

const modes: { n: string; w: string; on?: boolean }[] = [
  { n: "INFER", w: "w-[28px]" },
  { n: "SNAP", w: "w-[28px]" },
  { n: "GRID", w: "w-[25px]" },
  { n: "ORTHO", w: "w-[37px]" },
  { n: "POLAR", w: "w-[35px]" },
  { n: "OSNAP", w: "w-[36px]", on: true },
  { n: "3DOSNAP", w: "w-[47px]" },
  { n: "OTRACK", w: "w-[42px]", on: true },
  { n: "DUCS", w: "w-[29px]", on: true },
  { n: "DYN", w: "w-[23px]" },
  { n: "LWT", w: "w-[23px]" },
  { n: "TPY", w: "w-[22px]" },
  { n: "QP", w: "w-[16px]" },
  { n: "SC", w: "w-[15px]" },
];

const person = (c: string) => <path d="M5.500 1L2 9M5.500 1L9 9M3.500 6h4" stroke={c} />;

const tray: [string, React.ReactNode][] = [
  ["Annotation visibility", <Svg w={11} h={10}>{person("#f5f5f5")}<circle cx="8" cy="3" r="1.500" fill="#f3cf4a" stroke="none" /></Svg>],
  ["Auto scale", <Svg w={11} h={10}>{person("#c5c5c5")}</Svg>],
  ["Workspace", <Svg w={11} h={10}><circle cx="5.500" cy="5" r="3.500" stroke="#f5f5f5" strokeWidth="2" strokeDasharray="2 1" /><circle cx="5.500" cy="5" r="2" stroke="#333" /></Svg>],
  ["Lock UI", <Svg w={11} h={10}><rect x="1.500" y="4.500" width="5" height="4" fill="#eee" stroke="#333" /><path d="M6 4V2.500h3V5" stroke="#f5f5f5" /></Svg>],
  ["Hardware", <Svg w={11} h={10}><rect x="1.500" y="1.500" width="8" height="4" fill="#dfe8f2" stroke="#456" /><path d="M7 6l2 3" stroke="#f3cf4a" strokeWidth="2" /></Svg>],
  ["Isolate objects", <Svg w={11} h={10}><rect x="1.500" y="1.500" width="5" height="6" fill="#5a8fc0" stroke="#346" /><rect x="4.500" y="5.500" width="5" height="3" fill="#f3cf4a" stroke="#a80" /></Svg>],
  ["Tips", <Svg w={11} h={10}><path d="M4 7C2 5 2.500 1 5.500 1S9 5 7 7v2H4z" fill="#fbe48a" stroke="#997" /></Svg>],
];

function StatusBar() {
  return (
    <footer className="flex h-[14px] items-center overflow-hidden border-b border-t border-[#666] bg-gradient-to-b from-[#8c8c8c] to-[#a0a0a0] font-['Liberation_Sans'] text-[10px] leading-[12px] text-[#2c2c2c]">
      <span className="w-[237px] shrink-0 whitespace-nowrap pl-[7px] leading-[8px]">1.689160E+05, -1.74620E+04, 0.000000</span>
      {modes.map((m) => (
        <button
          key={m.n}
          aria-pressed={!!m.on}
          className={`flex h-[12px] shrink-0 items-center justify-center whitespace-nowrap border-r border-[#777] ${m.w} ${m.on ? "bg-[#a9d9ea]" : "bg-[#b5b5b5]"}`}
        >
          {m.n}
        </button>
      ))}
      <div className="ml-auto flex items-center pr-[10px]">
        <button className="h-[12px] border-r border-[#777] bg-[#b5b5b5]">MODEL</button>
        <button aria-label="Quick view layouts" className="border-r border-[#777] bg-[#b5b5b5]">
          <Svg w={11} h={11}><path d="M2.500 2.500h6v6h-6zM4 4l3 3" stroke="#222" /></Svg>
        </button>
        <button aria-label="Quick view drawings" className="mr-[10px] bg-[#b5b5b5]">
          <Svg w={11} h={11}><path d="M1.500 2.500h3v3h-3zM6.500 2.500h3v3h-3zM1 8.500h9" stroke="#222" /></Svg>
        </button>
        <button aria-label="Annotation scale" className="flex items-center gap-px bg-[#b5b5b5] pr-1">
          <Svg w={11} h={11}>{person("#f5f5f5")}</Svg>
          1:1
          <Caret />
        </button>
        {tray.map(([name, icon]) => (
          <button key={name} aria-label={name} className="border-l border-[#888] bg-[#adadad]">
            {icon}
          </button>
        ))}
        <button aria-label="Status bar menu" className="flex h-[12px] w-[8px] items-center justify-center">
          <Caret />
        </button>
        <button aria-label="Clean screen" className="bg-[#adadad]">
          <Svg w={11} h={11}><rect x="1.500" y="1.500" width="7" height="7" fill="#fff" stroke="#333" /></Svg>
        </button>
      </div>
    </footer>
  );
}

export default function App() {
  return (
    <div className="overflow-hidden bg-white font-['Lato','Noto_Sans_CJK_KR',sans-serif] text-[11px]">
      <TabStrip />
      <Ribbon />
      <Viewport />
      <LayoutTabs />
      <CommandWindow />
      <StatusBar />
    </div>
  );
}
